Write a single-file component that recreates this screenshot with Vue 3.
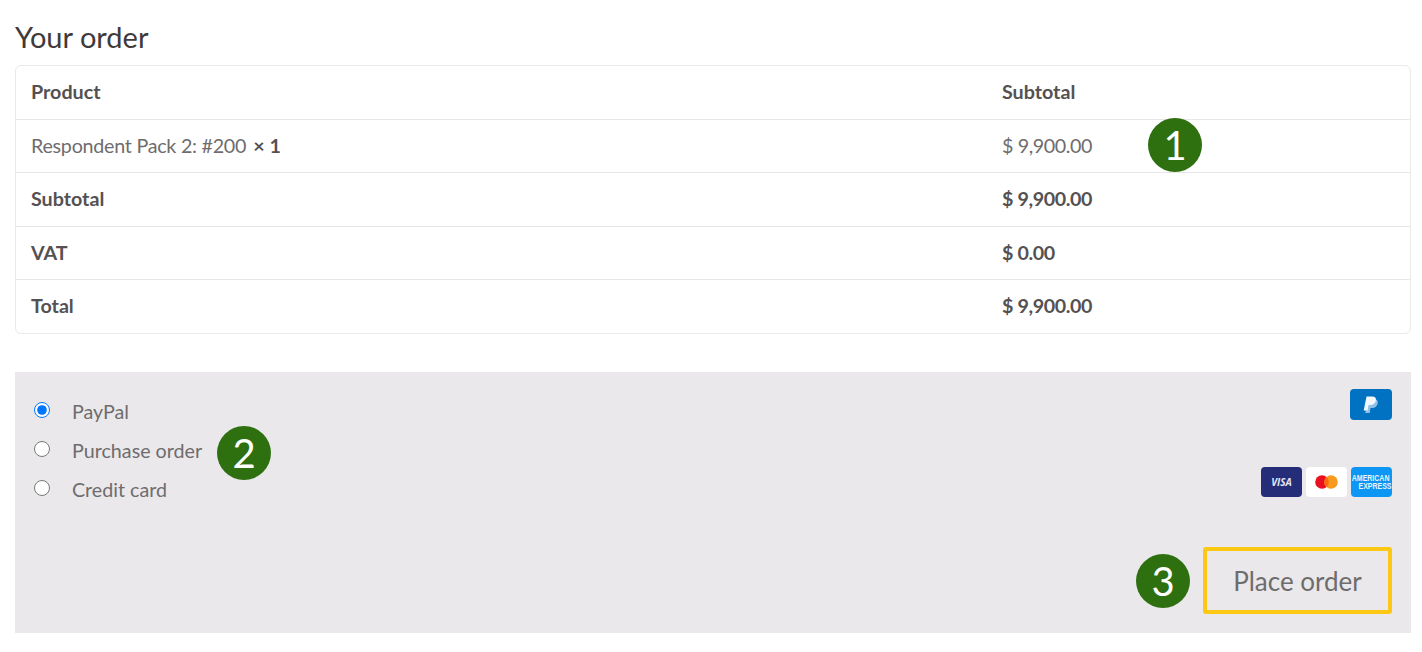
<template>
	<div class="page">
		<h3 class="title">Your order</h3>
		<div class="order">
			<table class="order-table">
				<thead>
					<tr>
						<th class="col-name">Product</th>
						<th>Subtotal</th>
					</tr>
				</thead>
				<tbody>
					<tr>
						<td><span class="tight">Respondent Pack 2: #200</span> <strong class="qty">× 1</strong></td>
						<td class="num">$ 9,900.00</td>
					</tr>
				</tbody>
				<tfoot>
					<tr v-for="row in totals" :key="row.label">
						<th>{{ row.label }}</th>
						<th class="num">{{ row.value }}</th>
					</tr>
				</tfoot>
			</table>
			<span class="badge badge-1">1</span>
		</div>

		<div class="payment">
			<div class="methods">
				<ul class="method-list">
					<li v-for="m in methods" :key="m">
						<input type="radio" name="pay" :id="m" :value="m" v-model="method" />
						<label :for="m">{{ m }}</label>
					</li>
				</ul>
				<span class="badge badge-2">2</span>
				<div class="cards">
					<svg class="card paypal" viewBox="0 0 42 31">
						<rect width="42" height="31" rx="4" fill="#0171c1" />
						<path d="M18 10h5.500c3.200 0 4.800 1.600 4.300 4.200-.6 3-2.700 4.700-5.700 4.700h-1.600l-.8 5h-4.400z" fill="#8fc1e8" />
						<path d="M16.500 7.500h5.500c3 0 4.400 1.500 3.900 4-.6 2.900-2.600 4.500-5.500 4.500h-1.900l-.9 5.500h-3.900z" fill="#f2f8fd" />
					</svg>
					<div class="card-row">
						<svg class="card" viewBox="0 0 41 30">
							<rect width="41" height="30" rx="4" fill="#252c78" />
							<text x="20.500" y="19" text-anchor="middle" class="visa">VISA</text>
						</svg>
						<svg class="card" viewBox="0 0 41 30">
							<rect width="41" height="30" rx="4" fill="#fff" />
							<circle cx="16" cy="15" r="6.800" fill="#e9101f" />
							<circle cx="25" cy="15" r="6.800" fill="#f79a1e" />
							<path d="M20.500 9.900a6.800 6.800 0 0 1 0 10.200a6.800 6.800 0 0 1 0-10.200z" fill="#fb6a10" />
						</svg>
						<svg class="card" viewBox="0 0 41 30">
							<rect width="41" height="30" rx="4" fill="#0e96f5" />
							<text x="0.800" y="11.200" transform="scale(1 1.250)" class="amex">AMERICAN</text>
							<text x="7.500" y="18" transform="scale(1 1.250)" class="amex">EXPRESS</text>
						</svg>
					</div>
				</div>
			</div>
			<div class="actions">
				<span class="badge">3</span>
				<button class="place-order">Place order</button>
			</div>
		</div>
	</div>
</template>

<script setup>
	import { ref } from 'vue'

	const totals = [
		{ label: 'Subtotal', value: '$ 9,900.00' },
		{ label: 'VAT', value: '$ 0.00' },
		{ label: 'Total', value: '$ 9,900.00' }
	]
	const methods = ['PayPal', 'Purchase order', 'Credit card']
	const method = ref('PayPal')
</script>

<style>
	html,
	body {
		background: #fff;
	}
</style>

<style scoped>
	.page {
		padding: 17px 11px 0 15px;
		font-family: Lato, "Liberation Sans", sans-serif;
		font-size: 19.700px;
		color: #6f6c6d;
	}

	.title {
		margin: 0 0 9px;
		font-size: 29px;
		font-weight: 400;
		line-height: 39px;
		color: #3f3a3b;
	}

	.order {
		position: relative;
		margin-bottom: 38px;
	}

	.order-table {
		width: 100%;
		border: 1px solid #e9e9e9;
		border-radius: 6px;
		border-collapse: separate;
		border-spacing: 0;
		table-layout: fixed;
	}

	.col-name {
		width: 971px;
	}

	th,
	td {
		height: 53.500px;
		box-sizing: border-box;
		padding: 0 15px 1px;
		text-align: left;
		border-top: 1.500px solid #e6e6e6;
	}

	thead th {
		border-top: 0;
		height: 52.500px;
		padding-bottom: 2px;
	}

	tfoot tr:last-child th {
		height: 54px;
		padding-bottom: 3px;
	}

	th,
	.qty {
		font-weight: 700;
		color: #555152;
	}

	.tight {
		letter-spacing: -0.250px;
	}

	.num {
		letter-spacing: -0.400px;
	}

	.qty {
		margin-left: 2px;
	}

	.badge {
		display: flex;
		align-items: center;
		justify-content: center;
		flex: none;
		width: 54px;
		height: 54px;
		border-radius: 50%;
		background: #2e6f10;
		color: #fff;
		font-family: Lato, sans-serif;
		font-size: 40px;
		line-height: 1;
	}

	.badge-1 {
		position: absolute;
		left: 1133px;
		top: 53px;
	}

	.badge-2 {
		position: absolute;
		left: 183px;
		top: 37px;
	}

	.payment {
		background: #eae8eb;
		height: 261px;
		padding: 17px 19px 19px;
		box-sizing: border-box;
		display: flex;
		flex-direction: column;
		justify-content: space-between;
	}

	.methods {
		position: relative;
		display: flex;
		justify-content: space-between;
	}

	.method-list {
		list-style: none;
		margin: 0;
		padding: 3px 0 0;
	}

	.method-list li {
		display: flex;
		align-items: center;
		height: 39px;
	}

	.method-list input {
		width: 16px;
		height: 16px;
		margin: 0 22px 3px 0;
	}

	.method-list label {
		margin-bottom: 1px;
	}

	.cards {
		display: flex;
		flex-direction: column;
		align-items: flex-end;
		gap: 47px;
	}

	.card-row {
		display: flex;
		gap: 4px;
	}

	.card {
		display: block;
		width: 41px;
		height: 30px;
	}

	.paypal {
		width: 42px;
		height: 31px;
	}

	.visa {
		font-family: "Open Sans", sans-serif;
		font-size: 10px;
		font-weight: 700;
		font-style: italic;
		fill: #e3e5f2;
	}

	.amex {
		font-family: "Liberation Sans", sans-serif;
		font-size: 7px;
		font-weight: 700;
		fill: #e9f4fd;
	}

	.actions {
		display: flex;
		justify-content: flex-end;
		align-items: center;
		gap: 13px;
	}

	.place-order {
		width: 189px;
		height: 67px;
		box-sizing: border-box;
		border: 4px solid #fdc814;
		border-radius: 3px;
		background: transparent;
		color: #6f6c6d;
		font-family: Lato, "Liberation Sans", sans-serif;
		font-size: 26px;
	}
</style>
